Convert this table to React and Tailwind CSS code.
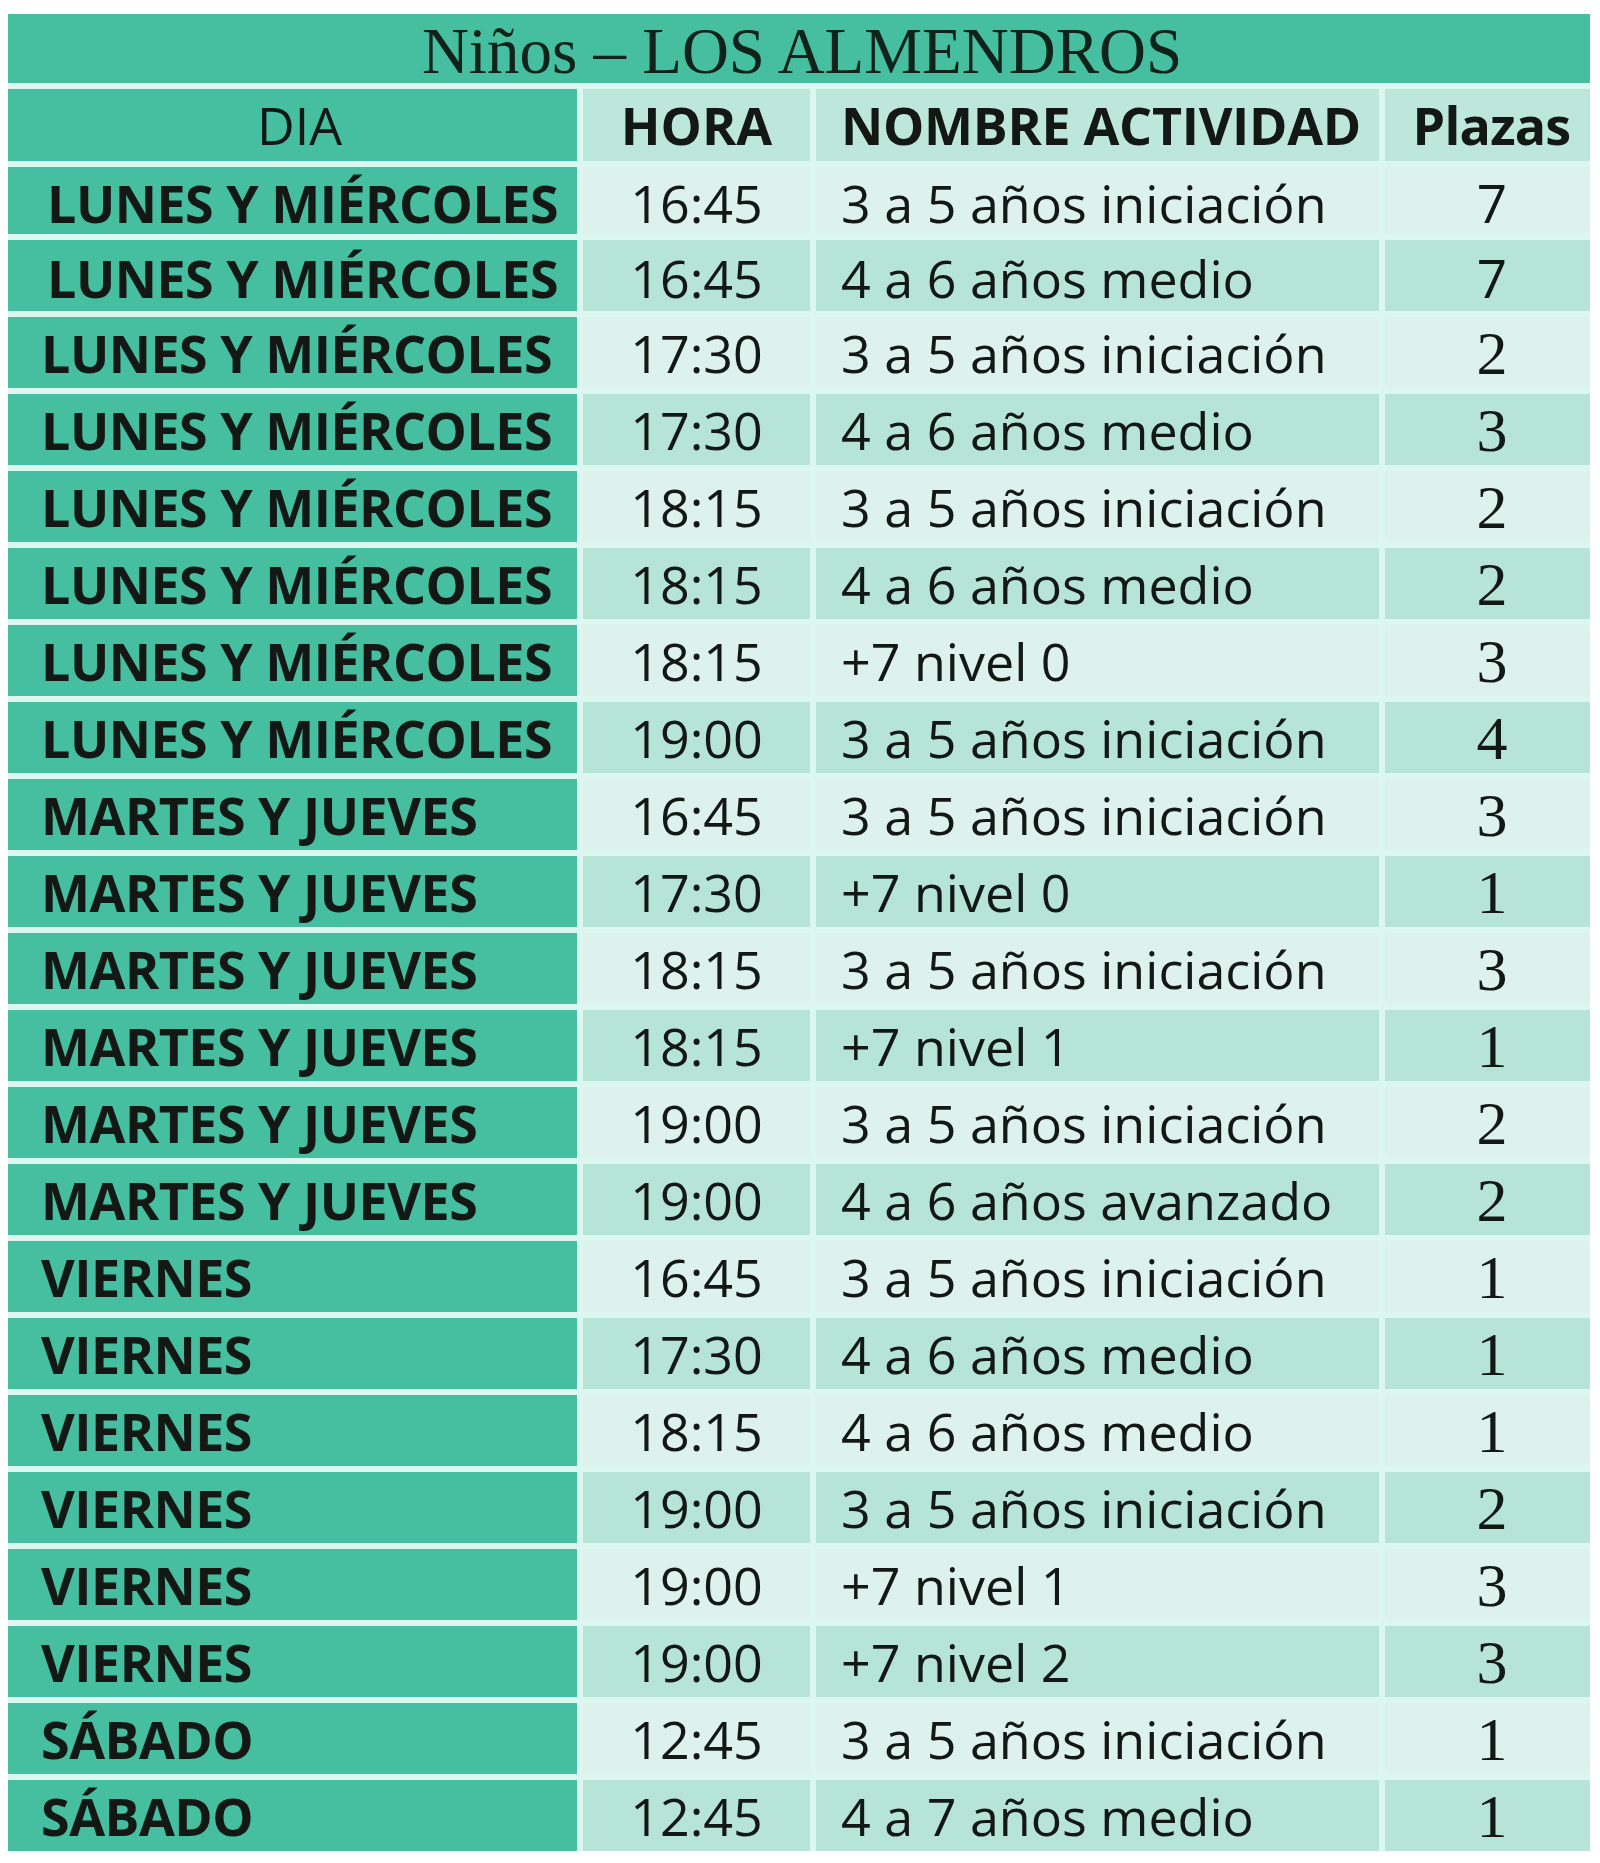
import React from "react";

const rows = [
  ["LUNES Y MIÉRCOLES", "16:45", "3 a 5 años iniciación", "7"],
  ["LUNES Y MIÉRCOLES", "16:45", "4 a 6 años medio", "7"],
  ["LUNES Y MIÉRCOLES", "17:30", "3 a 5 años iniciación", "2"],
  ["LUNES Y MIÉRCOLES", "17:30", "4 a 6 años medio", "3"],
  ["LUNES Y MIÉRCOLES", "18:15", "3 a 5 años iniciación", "2"],
  ["LUNES Y MIÉRCOLES", "18:15", "4 a 6 años medio", "2"],
  ["LUNES Y MIÉRCOLES", "18:15", "+7 nivel 0", "3"],
  ["LUNES Y MIÉRCOLES", "19:00", "3 a 5 años iniciación", "4"],
  ["MARTES Y JUEVES", "16:45", "3 a 5 años iniciación", "3"],
  ["MARTES Y JUEVES", "17:30", "+7 nivel 0", "1"],
  ["MARTES Y JUEVES", "18:15", "3 a 5 años iniciación", "3"],
  ["MARTES Y JUEVES", "18:15", "+7 nivel 1", "1"],
  ["MARTES Y JUEVES", "19:00", "3 a 5 años iniciación", "2"],
  ["MARTES Y JUEVES", "19:00", "4 a 6 años avanzado", "2"],
  ["VIERNES", "16:45", "3 a 5 años iniciación", "1"],
  ["VIERNES", "17:30", "4 a 6 años medio", "1"],
  ["VIERNES", "18:15", "4 a 6 años medio", "1"],
  ["VIERNES", "19:00", "3 a 5 años iniciación", "2"],
  ["VIERNES", "19:00", "+7 nivel 1", "3"],
  ["VIERNES", "19:00", "+7 nivel 2", "3"],
  ["SÁBADO", "12:45", "3 a 5 años iniciación", "1"],
  ["SÁBADO", "12:45", "4 a 7 años medio", "1"],
];

const sans = "font-['Open_Sans','Liberation_Sans',sans-serif]";
const serif = "font-['Liberation_Serif','Times_New_Roman',serif]";

export default function App() {
  return (
    <div className="w-[1600px] h-[1863px] bg-white pt-[14px] pl-[8px]">
      <div className="w-[1582px] bg-[#dcf7f0] grid grid-cols-[569px_227px_563px_205px] grid-rows-[69px_72px_67px_71px_repeat(20,71px)] gap-[6px] text-[#131815]">
        <div className="col-span-4 bg-[#45bf9f] flex items-center justify-center">
          <span className={`${serif} text-[65px] leading-none pt-[5px] pl-[6px] text-[#10231b]`}>
            Niños – LOS ALMENDROS
          </span>
        </div>

        <div className={`bg-[#45bf9f] flex items-center justify-center ${sans} text-[52px] leading-none pl-[14px]`}>
          DIA
        </div>
        <div className={`bg-[#bde7db] flex items-center justify-center ${sans} font-bold text-[52px] leading-none`}>
          HORA
        </div>
        <div className={`bg-[#bde7db] flex items-center pl-[25px] ${sans} font-bold text-[52px] leading-none tracking-[-0.3px]`}>
          NOMBRE ACTIVIDAD
        </div>
        <div className={`bg-[#bde7db] flex items-center justify-center ${sans} font-bold text-[52px] leading-none pl-[8px] tracking-[-0.8px]`}>
          Plazas
        </div>

        {rows.map((r, i) => {
          const light = i % 2 === 0;
          const bg = light ? "bg-[#ddf2ec]" : "bg-[#b6e5d8]";
          return (
            <React.Fragment key={i}>
              <div
                className={`bg-[#45bf9f] flex items-center ${sans} font-bold text-[52px] leading-none tracking-[-0.5px] ${
                  i < 2 ? "pl-[39px] pt-[4px]" : "pl-[33px]"
                }`}
              >
                {r[0]}
              </div>
              <div
                className={`${bg} flex items-center justify-center ${sans} text-[52px] leading-none ${
                  i < 2 ? "pt-[4px]" : ""
                }`}
              >
                {r[1]}
              </div>
              <div
                className={`${bg} flex items-center pl-[25px] ${sans} text-[52px] leading-none ${
                  i < 2 ? "pt-[4px]" : ""
                }`}
              >
                {r[2]}
              </div>
              <div
                className={`${bg} flex items-center justify-center leading-none pl-[9px] ${
                  r[3] === "7" ? `${sans} text-[53px]` : `${serif} text-[62px]`
                } ${i < 2 ? "pt-[4px]" : ""}`}
              >
                {r[3]}
              </div>
            </React.Fragment>
          );
        })}
      </div>
    </div>
  );
}
